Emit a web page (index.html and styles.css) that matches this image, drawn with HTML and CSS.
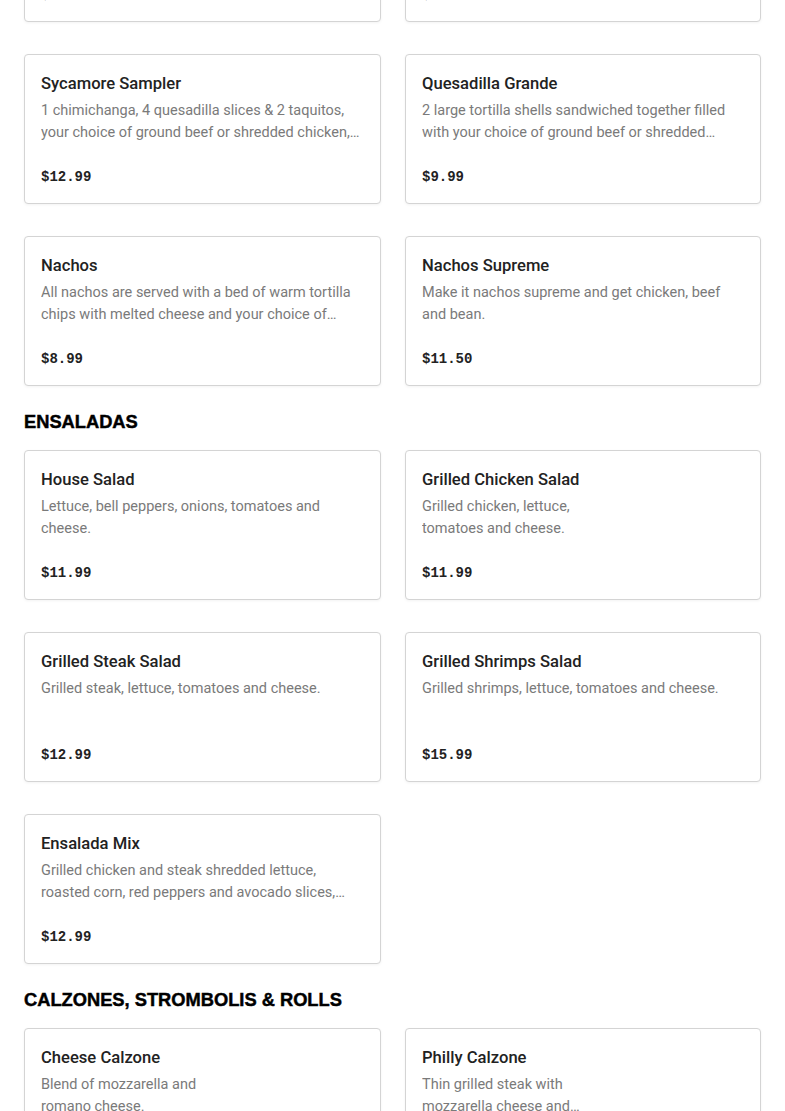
FILE: index.html
```html
<!DOCTYPE html>
<html lang="en">
<head>
<meta charset="utf-8">
<title>Menu</title>
<link rel="stylesheet" href="styles.css">
</head>
<body>
<main class="menu">
  <section class="section section-cut">
    <div class="grid">
      <article class="card">
        <h3 class="item-name">Chimichanga</h3>
        <p class="item-desc">Deep fried flour tortilla filled with your choice of ground beef or shredded chicken.</p>
        <div class="item-price">$10.99</div>
      </article>
      <article class="card">
        <h3 class="item-name">Taquitos</h3>
        <p class="item-desc">Rolled corn tortillas filled with shredded chicken.</p>
        <div class="item-price">$8.99</div>
      </article>
      <article class="card">
        <h3 class="item-name">Sycamore Sampler</h3>
        <p class="item-desc">1 chimichanga, 4 quesadilla slices &amp; 2 taquitos, your choice of ground beef or shredded chicken, served with sour cream and salsa.</p>
        <div class="item-price">$12.99</div>
      </article>
      <article class="card">
        <h3 class="item-name">Quesadilla Grande</h3>
        <p class="item-desc">2 large tortilla shells sandwiched together filled with your choice of ground beef or shredded chicken and cheese.</p>
        <div class="item-price">$9.99</div>
      </article>
      <article class="card">
        <h3 class="item-name">Nachos</h3>
        <p class="item-desc">All nachos are served with a bed of warm tortilla chips with melted cheese and your choice of ground beef or shredded chicken.</p>
        <div class="item-price">$8.99</div>
      </article>
      <article class="card">
        <h3 class="item-name">Nachos Supreme</h3>
        <p class="item-desc">Make it nachos supreme and get chicken, beef and bean.</p>
        <div class="item-price">$11.50</div>
      </article>
    </div>
  </section>

  <section class="section">
    <h2 class="section-title">ENSALADAS</h2>
    <div class="grid">
      <article class="card">
        <h3 class="item-name">House Salad</h3>
        <p class="item-desc">Lettuce, bell peppers, onions, tomatoes and cheese.</p>
        <div class="item-price">$11.99</div>
      </article>
      <article class="card">
        <h3 class="item-name">Grilled Chicken Salad</h3>
        <p class="item-desc">Grilled chicken, lettuce,<br>tomatoes and cheese.</p>
        <div class="item-price">$11.99</div>
      </article>
      <article class="card">
        <h3 class="item-name">Grilled Steak Salad</h3>
        <p class="item-desc">Grilled steak, lettuce, tomatoes and cheese.</p>
        <div class="item-price">$12.99</div>
      </article>
      <article class="card">
        <h3 class="item-name">Grilled Shrimps Salad</h3>
        <p class="item-desc">Grilled shrimps, lettuce, tomatoes and cheese.</p>
        <div class="item-price">$15.99</div>
      </article>
      <article class="card">
        <h3 class="item-name">Ensalada Mix</h3>
        <p class="item-desc">Grilled chicken and steak shredded lettuce, roasted corn, red peppers and avocado slices, topped with cheese.</p>
        <div class="item-price">$12.99</div>
      </article>
    </div>
  </section>

  <section class="section">
    <h2 class="section-title">CALZONES, STROMBOLIS &amp; ROLLS</h2>
    <div class="grid">
      <article class="card">
        <h3 class="item-name">Cheese Calzone</h3>
        <p class="item-desc">Blend of mozzarella and<br>romano cheese.</p>
        <div class="item-price">$9.99</div>
      </article>
      <article class="card">
        <h3 class="item-name">Philly Calzone</h3>
        <p class="item-desc">Thin grilled steak with<br>mozzarella cheese and<br>onions.</p>
        <div class="item-price">$11.99</div>
      </article>
    </div>
  </section>
</main>
</body>
</html>
```

FILE: styles.css
```css
* {
  box-sizing: border-box;
}

html, body {
  margin: 0;
  padding: 0;
  background: #ffffff;
}

body {
  font-family: "Roboto", "Liberation Sans", Arial, sans-serif;
  color: #222222;
}

.menu {
  padding: 0 24px 24px;
  margin-top: -128px;
}

.section {
  display: flex;
  flex-direction: column;
}

.section-title {
  margin: 24px 0 16px;
  font-family: "Liberation Sans", Arial, sans-serif;
  font-size: 18.3px;
  line-height: 24px;
  font-weight: 700;
  color: #000000;
  -webkit-text-stroke: 0.45px #000000;
  letter-spacing: 0;
}

.grid {
  display: grid;
  grid-template-columns: 357px 356px;
  column-gap: 24px;
  row-gap: 32px;
}

.card {
  height: 150px;
  border: 1px solid #d4d4d4;
  border-radius: 4px;
  box-shadow: 0 1px 3px rgba(0, 0, 0, 0.05);
  padding: 17px 16px 15px;
  display: flex;
  flex-direction: column;
  background: #ffffff;
}

.item-name {
  margin: 0;
  font-size: 16.6px;
  line-height: 24px;
  font-weight: 500;
  color: #222222;
}

.item-desc {
  margin: 4px 0 0;
  font-size: 14.5px;
  line-height: 22px;
  color: #7a7a7a;
  display: -webkit-box;
  -webkit-line-clamp: 2;
  -webkit-box-orient: vertical;
  overflow: hidden;
  padding-right: 4px;
}

.item-price {
  margin-top: auto;
  font-family: "Liberation Mono", "DejaVu Sans Mono", monospace;
  font-size: 14px;
  line-height: 22px;
  font-weight: 700;
  color: #222222;
}
```
